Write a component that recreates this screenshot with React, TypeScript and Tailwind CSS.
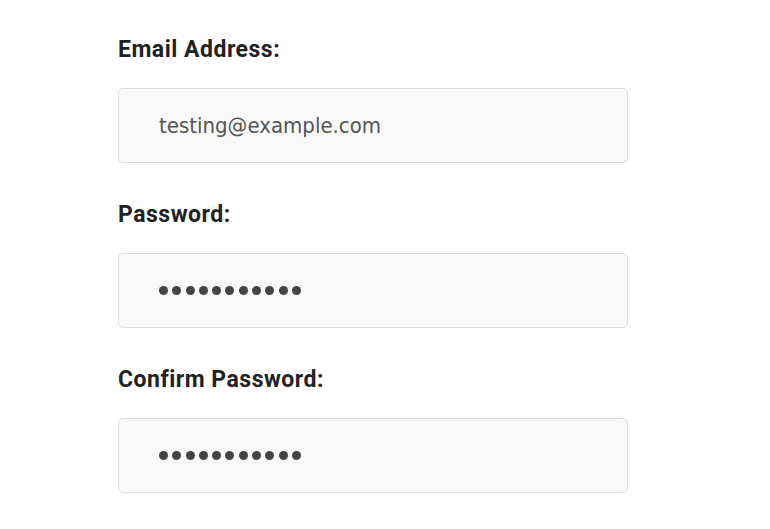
import React from "react";

const fields = [
  { label: "Email Address:", type: "text", value: "testing@example.com" },
  { label: "Password:", type: "password", value: "" },
  { label: "Confirm Password:", type: "password", value: "" },
];

function Dots() {
  return (
    <div className="flex items-center gap-[4.3px]">
      {Array.from({ length: 11 }).map((_, i) => (
        <span key={i} className="block h-[9px] w-[9px] rounded-full bg-[#444444]" />
      ))}
    </div>
  );
}

export default function App() {
  return (
    <div className="min-h-[529px] w-[770px] bg-white pt-[36px] pl-[118px]">
      <div className="flex w-[510px] flex-col gap-[38px]">
        {fields.map((f) => (
          <div key={f.label} className="flex flex-col gap-[24px]">
            <label className="text-[23px] leading-[28px] font-bold tracking-[0.5px] text-[#222222] [font-family:Roboto,sans-serif]">
              {f.label}
            </label>
            <div className="flex h-[75px] w-[510px] items-center rounded-[5px] border border-[#dcdcdc] bg-[#f9f9f9] pl-[40px] text-[22px] leading-[28px] text-[#555555] [font-family:'DejaVu_Sans_Condensed','DejaVu_Sans',sans-serif] [font-stretch:condensed]">
              {f.type === "password" ? <Dots /> : <span>{f.value}</span>}
            </div>
          </div>
        ))}
      </div>
    </div>
  );
}
